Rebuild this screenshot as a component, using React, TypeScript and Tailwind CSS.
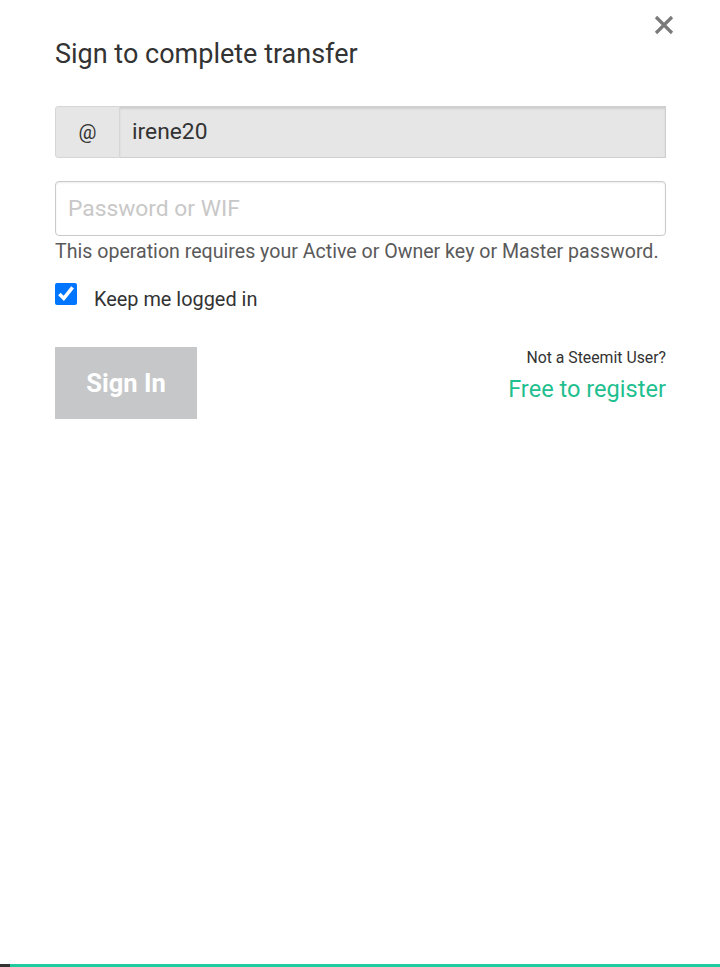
export default function App() {
  return (
    <div className="relative h-[967px] w-[720px] overflow-hidden bg-white font-['Roboto',sans-serif] text-[#333]">
      <button className="absolute right-[45px] top-[14px] text-[#777]" aria-label="close">
        <svg width="22" height="22" viewBox="0 0 22 22">
          <path d="M3 3 L19 19 M19 3 L3 19" stroke="#7a7a7a" strokeWidth="3.2" strokeLinecap="butt" />
        </svg>
      </button>
      <div className="flex flex-col px-[55px] pt-[36px]">
        <h1 className="text-[27px] leading-[36px] font-normal text-[#333]">Sign to complete transfer</h1>

        <div className="mt-[34px] flex h-[52px] w-[611px]">
          <span className="flex w-[65px] items-center justify-center rounded-l-[3px] border border-[#d6d6d6] bg-[#e6e6e6] text-[20px] text-[#333]">
            @
          </span>
          <div className="flex flex-1 items-center border border-l-0 border-[#cfcfcf] bg-[#e6e6e6] px-[12px] text-[22.8px] shadow-[inset_0_2px_2px_rgba(0,0,0,0.1)]">
            irene20
          </div>
        </div>

        <input
          type="password"
          placeholder="Password or WIF"
          className="mt-[23px] h-[55px] w-[611px] rounded-[4px] border border-[#cacaca] px-[12px] text-[22.8px] outline-none shadow-[inset_0_1px_2px_rgba(0,0,0,0.08)] placeholder:text-[#c8c8c8]"
        />
        <p className="mt-[3px] text-[19.6px] leading-[26px] text-[#5a5a5a]">
          This operation requires your Active or Owner key or Master password.
        </p>

        <label className="mt-[18px] flex h-[24px] items-start gap-[17px] text-[19.9px] text-[#333]">
          <input type="checkbox" defaultChecked className="m-0 h-[22px] w-[22px] accent-[#0075ff]" />
          <span className="mt-[5px] leading-[24px]">Keep me logged in</span>
        </label>

        <div className="mt-[40px] flex w-[611px] items-start justify-between">
          <button className="h-[72px] w-[142px] bg-[#c6c7c9] text-[25.5px] font-bold text-white">Sign In</button>
          <div className="flex flex-col items-end pt-[1px]">
            <span className="text-[15.8px] leading-[20px] text-[#333]">Not a Steemit User?</span>
            <span className="mt-[7px] text-[23.6px] leading-[28px] text-[#1fbf8f]">Free to register</span>
          </div>
        </div>
      </div>
      <div className="absolute bottom-0 left-0 flex h-[3px] w-full">
        <div className="w-[10px] bg-[#333]" />
        <div className="flex-1 bg-[#1ecc9f]" />
      </div>
    </div>
  );
}
